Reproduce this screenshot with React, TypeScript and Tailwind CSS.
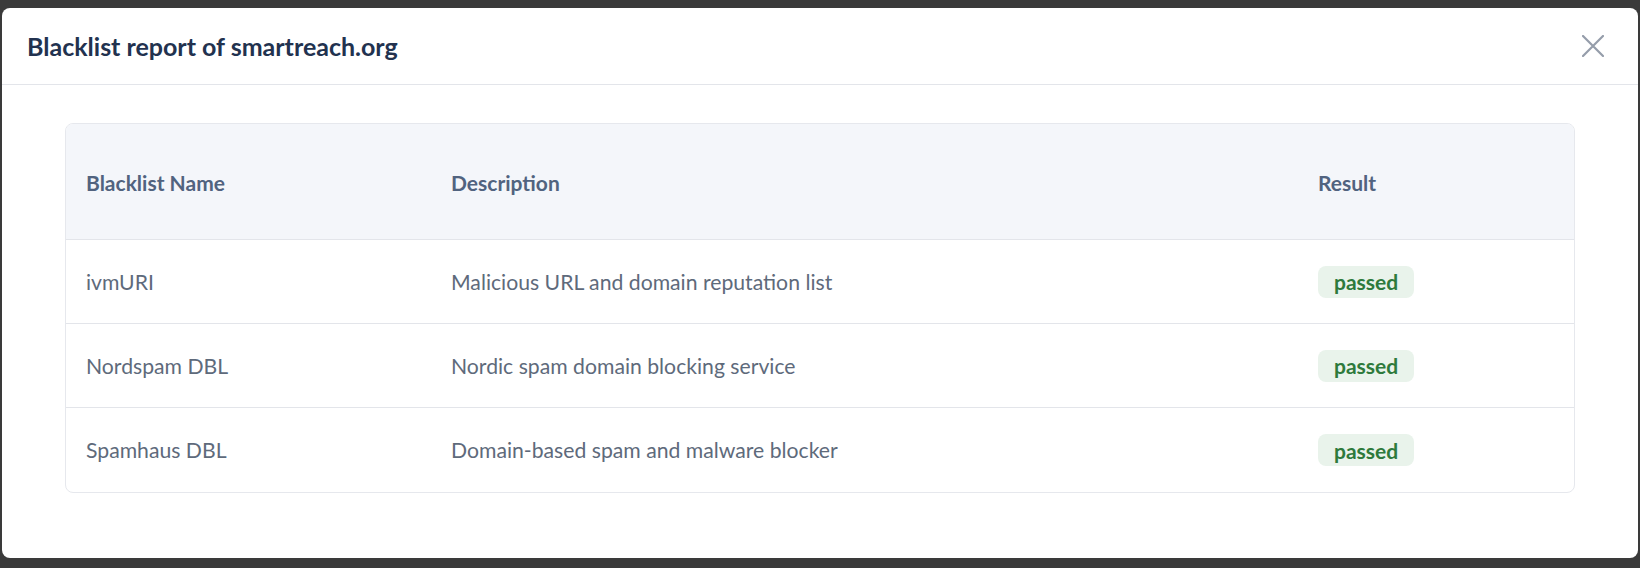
import React from "react";

const rows = [
  { name: "ivmURI", desc: "Malicious URL and domain reputation list" },
  { name: "Nordspam DBL", desc: "Nordic spam domain blocking service" },
  { name: "Spamhaus DBL", desc: "Domain-based spam and malware blocker" },
];

export default function App() {
  return (
    <div
      className="w-[1640px] h-[568px] bg-[#3a3a3a] pt-[8px] pl-[2px] pr-[2px] pb-[10px]"
      style={{ fontFamily: "Lato, 'Noto Sans', sans-serif" }}
    >
      <div className="h-full bg-white rounded-[8px] flex flex-col">
        <div className="h-[77px] flex items-center justify-between pl-[25px] pr-[34px] border-b border-[#e3e5ea]">
          <h1 className="text-[25px] font-bold text-[#22324f] pt-[2px]">Blacklist report of smartreach.org</h1>
          <button className="w-[22px] h-[22px] flex items-center justify-center">
            <svg width="22" height="22" viewBox="0 0 22 22" fill="none">
              <path d="M1 1L21 21M21 1L1 21" stroke="#959daa" strokeWidth="2.2" strokeLinecap="round" />
            </svg>
          </button>
        </div>
        <div className="pt-[38px] px-[63px]">
          <div className="border border-[#e6e8ed] rounded-[8px] overflow-hidden">
            <div className="grid grid-cols-[385px_867px_1fr] h-[116px] pt-[3px] items-center bg-[#f4f6fa] border-b border-[#e3e5ea] text-[21px] font-bold text-[#51637f]">
              <div className="pl-[20px]">Blacklist Name</div>
              <div>Description</div>
              <div>Result</div>
            </div>
            {rows.map((r, i) => (
              <div
                key={r.name}
                className={`grid grid-cols-[385px_867px_1fr] h-[84px] pt-[2px] items-center text-[21.2px] text-[#5e6a7b] ${i < rows.length - 1 ? "border-b border-[#e3e5ea]" : ""}`}
              >
                <div className="pl-[20px]">{r.name}</div>
                <div>{r.desc}</div>
                <div>
                  <span className="inline-flex items-center h-[32px] px-[16px] rounded-[8px] bg-[#e9f3eb] text-[#2e7a3c] font-bold text-[21px]">
                    passed
                  </span>
                </div>
              </div>
            ))}
          </div>
        </div>
      </div>
    </div>
  );
}
